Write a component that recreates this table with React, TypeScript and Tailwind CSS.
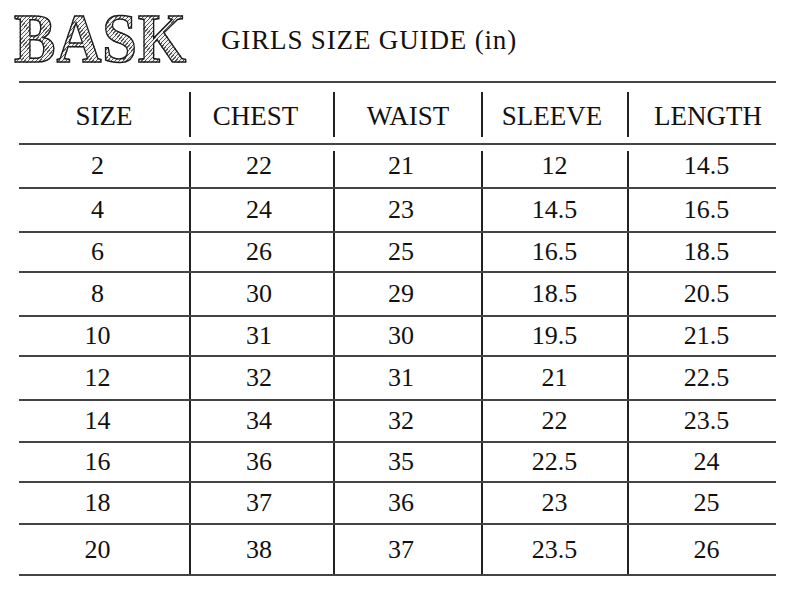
import React from "react";

const rows: { h: string; v: string[] }[] = [
  { h: "h-[42px]", v: ["2", "22", "21", "12", "14.5"] },
  { h: "h-[42px]", v: ["4", "24", "23", "14.5", "16.5"] },
  { h: "h-[38px]", v: ["6", "26", "25", "16.5", "18.5"] },
  { h: "h-[42px]", v: ["8", "30", "29", "18.5", "20.5"] },
  { h: "h-[38px]", v: ["10", "31", "30", "19.5", "21.5"] },
  { h: "h-[42px]", v: ["12", "32", "31", "21", "22.5"] },
  { h: "h-[40px]", v: ["14", "34", "32", "22", "23.5"] },
  { h: "h-[38px]", v: ["16", "36", "35", "22.5", "24"] },
  { h: "h-[40px]", v: ["18", "37", "36", "23", "25"] },
  { h: "h-[49px]", v: ["20", "38", "37", "23.5", "26"] },
];

// column widths, header text nudges, body text nudges
const cols = [
  { w: "w-[170px]", head: "SIZE", hx: "", bx: "pr-[13px]" },
  { w: "w-[144px]", head: "CHEST", hx: "pr-[13px]", bx: "pr-[6px]" },
  { w: "w-[148px]", head: "WAIST", hx: "", bx: "pr-[14px]" },
  { w: "w-[146px]", head: "SLEEVE", hx: "pr-[6px]", bx: "pr-[1px]" },
  { w: "w-[149px]", head: "LENGTH", hx: "pl-[11px]", bx: "pl-[8px]" },
];

function Logo() {
  return (
    <div className="w-[207px] shrink-0">
      <span className="inline-block origin-left scale-x-[0.89] whitespace-nowrap font-['Liberation_Serif',serif] text-[70px] font-bold leading-[78px] tracking-[1px] bg-[repeating-linear-gradient(135deg,#5a5a5a_0px,#5a5a5a_1px,#f2f2f2_1px,#f2f2f2_3px)] bg-clip-text text-transparent [-webkit-text-stroke:1.5px_#1c1c1c]">
        BASK
      </span>
    </div>
  );
}

export default function App() {
  return (
    <div className="w-[787px] h-[603px] bg-white text-[#111] font-['Liberation_Serif',serif]">
      {/* Header */}
      <div className="flex h-[81px] pl-[14px]">
        <Logo />
        <div className="mt-[27px] text-[27px] leading-none tracking-[0.85px] whitespace-nowrap">
          GIRLS SIZE GUIDE (in)
        </div>
      </div>

      {/* Table */}
      <div className="ml-[19px] w-[757px] border-t-2 border-[#444]">
        <div className="flex h-[62px] border-b-2 border-[#444]">
          {cols.map((c, i) => (
            <div key={c.head} className={`${c.w} h-[60px] pt-[9px] pb-[6px]`}>
              <div
                className={`h-full flex items-center justify-center pt-[3px] text-[27px] leading-none ${c.hx} ${
                  i > 0 ? "border-l-2 border-[#222]" : ""
                }`}
              >
                {c.head}
              </div>
            </div>
          ))}
        </div>

        {rows.map((r, ri) => (
          <div key={r.v[0]} className={`flex ${r.h} box-content border-b-2 border-[#444]`}>
            {r.v.map((val, i) => (
              <div key={i} className={`${cols[i].w} h-full flex flex-col ${ri === 0 ? "pt-[6px]" : ""}`}>
                <div
                  className={`flex-1 flex items-center justify-center text-[26px] leading-none ${cols[i].bx} ${
                    ri === 0 ? "pb-[6px]" : ""
                  } ${i > 0 ? "border-l-2 border-[#222]" : ""}`}
                >
                  {val}
                </div>
              </div>
            ))}
          </div>
        ))}
      </div>
    </div>
  );
}
